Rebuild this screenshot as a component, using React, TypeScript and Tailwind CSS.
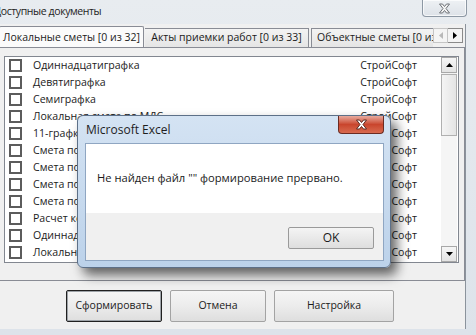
import React from "react";

const rows = [
  "Одиннадцатиграфка",
  "Девятиграфка",
  "Семиграфка",
  "Локальная смета по МДС",
  "11-графка",
  "Смета по форме 4",
  "Смета по форме 4*",
  "Смета по ТСН",
  "Смета по ТЕР",
  "Расчет компенсации",
  "Одиннадцатиграфка (ТЕР)",
  "Локальная смета",
];

const CloseGlyph = ({ fill, stroke }: { fill: string; stroke: string }) => (
  <svg width="13" height="11" viewBox="0 0 13 11">
    <path
      d="M1.5 1 L4.5 1 L6.5 3.5 L8.5 1 L11.5 1 L8 5.5 L11.5 10 L8.5 10 L6.5 7.5 L4.5 10 L1.5 10 L5 5.5 Z"
      fill={fill}
      stroke={stroke}
      strokeWidth="1"
      strokeLinejoin="round"
    />
  </svg>
);

const Tri = ({ dir, color }: { dir: "up" | "down" | "left" | "right"; color: string }) => {
  const d = {
    up: "M0 5 L3.5 1 L7 5 Z",
    down: "M0 1 L3.5 5 L7 1 Z",
    left: "M5 0 L1 3.5 L5 7 Z",
    right: "M1 0 L5 3.5 L1 7 Z",
  }[dir];
  const horiz = dir === "left" || dir === "right";
  return (
    <svg width={horiz ? 6 : 7} height={horiz ? 7 : 6} viewBox={horiz ? "0 0 6 7" : "0 0 7 6"}>
      <path d={d} fill={color} />
    </svg>
  );
};

const WinButton = ({ label, width, isDefault }: { label: string; width: string; isDefault?: boolean }) => (
  <div
    className={`${width} h-[32px] flex items-center justify-center text-[10.5px] text-[#1b1b1b] rounded-[2px] bg-gradient-to-b from-[#f5f5f5] via-[#ececec] to-[#dedede] ${
      isDefault ? "border border-[#202020] shadow-[inset_0_0_0_1px_#9ea3a8]" : "border border-[#a3a3a3]"
    }`}
  >
    {label}
  </div>
);

export default function App() {
  return (
    <div className="w-[476px] h-[335px] overflow-hidden relative bg-gradient-to-b from-[#e8ecf0] to-[#dde3ea] font-['Open_Sans',sans-serif]">
      {/* title bar */}
      <div className="h-[24px] flex items-start justify-between">
        <span className="-ml-[6px] mt-[4px] text-[10.5px] tracking-[-0.4px] text-[#1e1e1e] whitespace-nowrap">Доступные документы</span>
        <div className="mr-[9px] w-[45px] h-[17px] rounded-b-[4px] border border-t-0 border-[#8d98a4] bg-gradient-to-b from-[#eef1f4] to-[#dde2e8] flex items-center justify-center shadow-[inset_0_0_0_1px_rgba(255,255,255,0.7)]">
          <CloseGlyph fill="#f4f4f4" stroke="#6f7378" />
        </div>
      </div>

      <div className="flex">
        {/* client area */}
        <div className="w-[466px] h-[305px] bg-[#f0f0f0] flex flex-col border-r border-[#8b939c]">
          {/* tabs */}
          <div className="h-[23px] flex items-end">
            <div className="flex-1 flex items-end overflow-hidden">
              <div className="relative z-10 -ml-px -mb-px h-[22px] w-[145px] shrink-0 border border-b-0 border-[#898c95] bg-[#fbfbfb] flex items-center justify-center text-[10.5px] text-[#1b1b1b] rounded-t-[2px] whitespace-nowrap">
                Локальные сметы [0 из 32]
              </div>
              <div className="h-[19px] w-[164px] shrink-0 border border-l-0 border-b-0 border-[#898c95] bg-gradient-to-b from-[#f3f3f3] to-[#e5e5e5] flex items-center justify-center text-[10.5px] text-[#1b1b1b] ml-px whitespace-nowrap">
                Акты приемки работ [0 из 33]
              </div>
              <div className="h-[19px] w-[160px] shrink-0 border border-b-0 border-[#898c95] bg-gradient-to-b from-[#f3f3f3] to-[#e5e5e5] flex items-center pl-[5px] text-[10.5px] text-[#1b1b1b] whitespace-nowrap ml-[2px]">
                Объектные сметы [0 из 12]
              </div>
            </div>
            <div className="self-start mt-[4px] mr-[2px] flex">
              <div className="w-[15px] h-[15px] border border-[#c5c5c5] bg-[#f4f4f4] flex items-center justify-center">
                <Tri dir="left" color="#b8b8b8" />
              </div>
              <div className="w-[15px] h-[15px] border border-l-0 border-[#8a8a8a] bg-[#f4f4f4] flex items-center justify-center">
                <Tri dir="right" color="#000" />
              </div>
            </div>
          </div>

          {/* tab panel */}
          <div className="-ml-px h-[234px] border border-[#898c95] bg-[#f0f0f0] pt-[8px] pl-[4px]">
            <div className="w-[455px] h-[207px] border border-[#828790] bg-white flex">
              <div className="flex-1 flex flex-col">
                {rows.map((r, i) => (
                  <div key={i} className="h-[17px] flex items-center text-[10.6px] text-[#1b1b1b]">
                    <div className="ml-[4px] w-[13px] h-[13px] border-2 border-[#5c5c5c] bg-white shrink-0" />
                    <span className="ml-[11px] flex-1 whitespace-nowrap">{r}</span>
                    <span className="mr-[24px]">СтройСофт</span>
                  </div>
                ))}
              </div>
              <div className="w-[16px] mr-px flex flex-col bg-[#f3f3f3]">
                <div className="h-[16px] border border-[#a8a8a8] bg-gradient-to-b from-[#f6f6f6] to-[#e3e3e3] flex items-center justify-center">
                  <Tri dir="up" color="#000" />
                </div>
                <div className="mt-px h-[62px] border border-[#b0b0b0] bg-gradient-to-r from-[#f4f4f4] to-[#e4e4e4]" />
                <div className="flex-1 bg-[#f5f5f5]" />
                <div className="h-[16px] border border-[#a8a8a8] bg-gradient-to-b from-[#f6f6f6] to-[#e3e3e3] flex items-center justify-center">
                  <Tri dir="down" color="#000" />
                </div>
              </div>
            </div>
          </div>

          {/* buttons */}
          <div className="pt-[9px] pl-[66px] flex gap-[8px]">
            <WinButton label="Сформировать" width="w-[96px]" isDefault />
            <WinButton label="Отмена" width="w-[96px]" />
            <WinButton label="Настройка" width="w-[120px]" />
          </div>
        </div>
        <div className="flex-1" />
      </div>

      {/* modal message box */}
      <div className="absolute left-[77px] top-[115px] w-[314px] h-[153px] rounded-[6px] border border-[#5d7088] bg-gradient-to-b from-[#d4e3f3] to-[#bcd2ea] shadow-[6px_7px_12px_rgba(0,0,0,0.6)]">
        <div className="h-[26px] flex items-start justify-between">
          <span className="ml-[8px] mt-[5px] text-[12px] text-[#1e1e1e]">Microsoft Excel</span>
          <div className="mr-[6px] w-[46px] h-[18px] rounded-b-[4px] border border-t-0 border-[#6b2b22] bg-gradient-to-b from-[#e6a99d] via-[#c9452d] to-[#d86a4f] flex items-center justify-center">
            <CloseGlyph fill="#ffffff" stroke="#5a2a22" />
          </div>
        </div>
        <div className="ml-[7px] mt-px w-[299px] h-[118px] border border-[#8fa6c2] flex flex-col">
          <div className="h-[69px] bg-white flex items-center pl-[11px] text-[11.2px] text-[#1b1b1b] whitespace-nowrap">
            Не найден файл "" формирование прервано.
          </div>
          <div className="flex-1 bg-[#f0f0f0] flex justify-end items-start pt-[14px] pr-[9px]">
            <div className="w-[86px] h-[22px] border border-[#9a9a9a] rounded-[2px] bg-gradient-to-b from-[#f4f4f4] to-[#dedede] flex items-center justify-center text-[12px] text-[#1b1b1b]">
              OK
            </div>
          </div>
        </div>
      </div>
    </div>
  );
}
